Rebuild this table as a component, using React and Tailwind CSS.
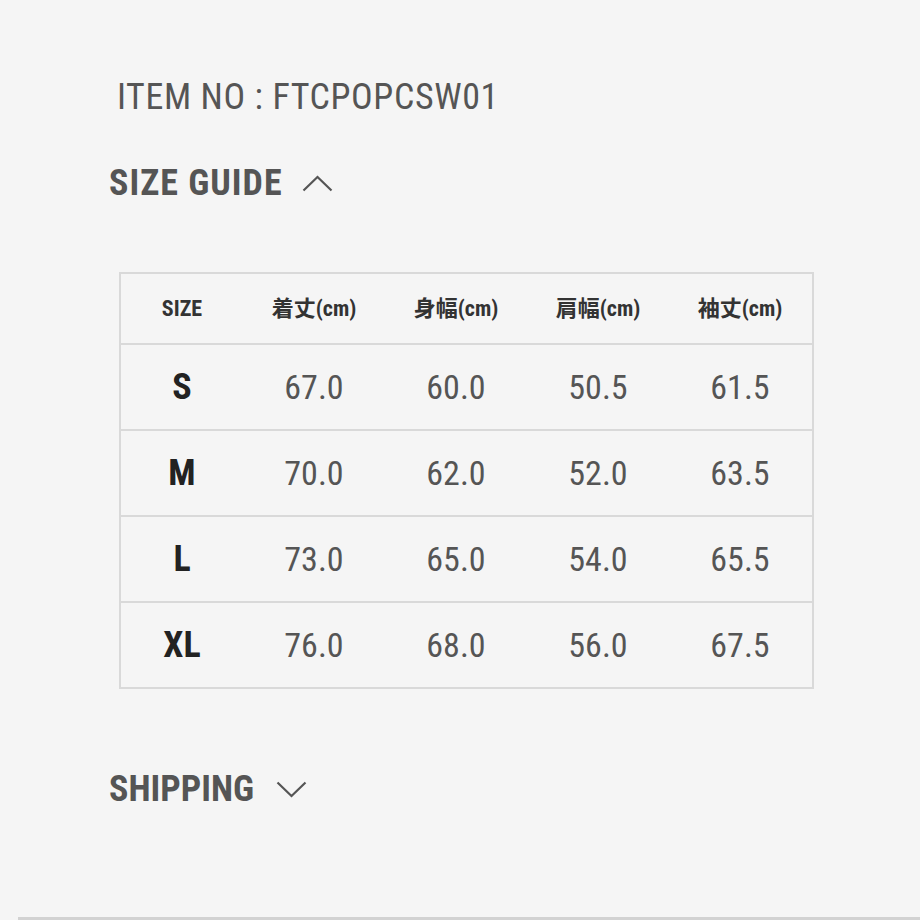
import React from "react";

const sizes = [
  { size: "S", values: ["67.0", "60.0", "50.5", "61.5"] },
  { size: "M", values: ["70.0", "62.0", "52.0", "63.5"] },
  { size: "L", values: ["73.0", "65.0", "54.0", "65.5"] },
  { size: "XL", values: ["76.0", "68.0", "56.0", "67.5"] },
];

const headers = ["着丈(cm)", "身幅(cm)", "肩幅(cm)", "袖丈(cm)"];

const Chevron = ({ up }) => (
  <svg width="31" height="17" viewBox="0 0 31 17" className="text-[#555]">
    <polyline
      points={up ? "1.5,15.5 15.5,2 29.5,15.5" : "1.5,1.5 15.5,15 29.5,1.5"}
      fill="none"
      stroke="currentColor"
      strokeWidth="2.2"
    />
  </svg>
);

const App = () => {
  return (
    <div className="w-[920px] h-[920px] bg-[#f5f5f5] overflow-hidden flex flex-col font-['Roboto_Condensed','Liberation_Sans_Narrow',Roboto,'Noto_Sans_CJK_JP',sans-serif] [font-stretch:75%]">
      {/* item number */}
      <div className="pl-[117px] pt-[74px] h-[120px] text-[36px] leading-[46px] text-[#555] tracking-[0.6px]">
        ITEM NO : FTCPOPCSW01
      </div>

      {/* size guide header */}
      <div className="pl-[109px] flex items-center gap-[19px] h-[46px] mt-[40px]">
        <span className="text-[36px] font-bold text-[#555] leading-[46px] tracking-[1px]">SIZE GUIDE</span>
        <Chevron up />
      </div>

      {/* table */}
      <div className="pl-[119px] mt-[66px]">
        <div className="w-[695px] border-2 border-[#d9d9d9]">
          <div className="flex h-[71px] items-center border-b-2 border-[#d9d9d9] text-[22px] font-bold text-[#333]">
            <div className="w-[122px] text-center">SIZE</div>
            {headers.map((h) => (
              <div key={h} className="w-[142px] text-center">
                {h}
              </div>
            ))}
          </div>
          {sizes.map((row, i) => (
            <div
              key={row.size}
              className={`flex items-center ${i < sizes.length - 1 ? "h-[86px] border-b-2 border-[#d9d9d9]" : "h-[84px]"}`}
            >
              <div className="w-[122px] text-center text-[36px] font-bold text-[#222]">{row.size}</div>
              {row.values.map((v, j) => (
                <div key={j} className="w-[142px] text-center text-[34px] text-[#555]">
                  {v}
                </div>
              ))}
            </div>
          ))}
        </div>
      </div>

      {/* shipping */}
      <div className="pl-[109px] flex items-center gap-[22px] h-[46px] mt-[77px]">
        <span className="text-[36px] font-bold text-[#555] leading-[46px]">SHIPPING</span>
        <Chevron />
      </div>

      <div className="flex-1" />
      <div className="ml-[18px] h-[3px] bg-[#d2d2d2]" />
    </div>
  );
};

export default App;
